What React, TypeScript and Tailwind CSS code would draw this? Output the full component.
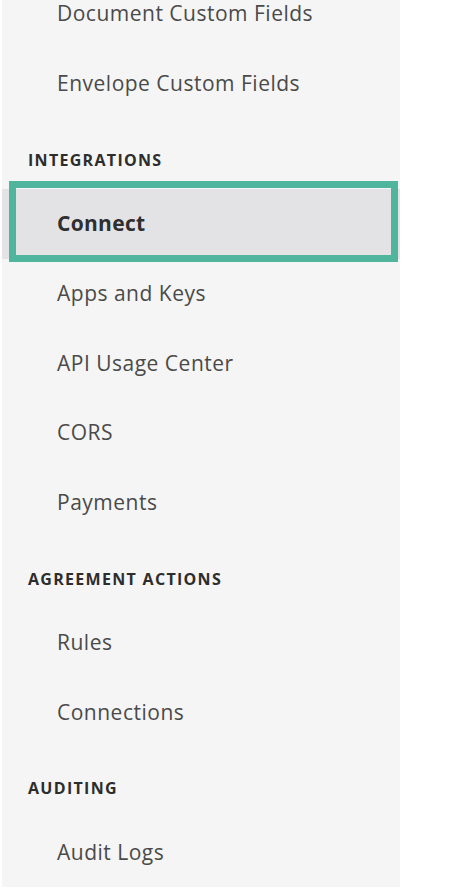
const sections: { title?: string; items: string[] }[] = [
  { items: ["Document Custom Fields", "Envelope Custom Fields"] },
  {
    title: "INTEGRATIONS",
    items: ["Connect", "Apps and Keys", "API Usage Center", "CORS", "Payments"],
  },
  { title: "AGREEMENT ACTIONS", items: ["Rules", "Connections"] },
  { title: "AUDITING", items: ["Audit Logs"] },
];

const active = "Connect";

export default function App() {
  return (
    <div className="h-[891px] w-[474px] overflow-hidden bg-white font-['Open_Sans',sans-serif]">
      <nav className="ml-[2px] h-[887px] w-[398px] overflow-hidden bg-[#f5f5f5]">
        <div className="-mt-[21px]">
          {sections.map((s, i) => (
            <div key={i}>
              {s.title && (
                <div className="flex h-[70px] items-start pl-[26px] pt-[31px]">
                  <span className="text-[16px] font-bold leading-[20px] tracking-[1.3px] text-[#2d2d2d]">
                    {s.title}
                  </span>
                </div>
              )}
              {s.items.map((item) =>
                item === active ? (
                  <div
                    key={item}
                    className="relative flex h-[70px] items-center bg-[#e3e3e6] pl-[55px]"
                  >
                    <span className="text-[21px] font-bold tracking-[0.3px] text-[#2f2f2f]">
                      {item}
                    </span>
                    {/* highlight frame */}
                    <div className="absolute -top-[8px] -bottom-[3px] left-[7px] w-[389px] border-[7px] border-[#4fb59c]" />
                  </div>
                ) : (
                  <div
                    key={item}
                    className="flex h-[69.8px] items-center pl-[55px]"
                  >
                    <span className="text-[21px] tracking-[0.5px] text-[#4a4a4a]">
                      {item}
                    </span>
                  </div>
                ),
              )}
            </div>
          ))}
        </div>
      </nav>
    </div>
  );
}
